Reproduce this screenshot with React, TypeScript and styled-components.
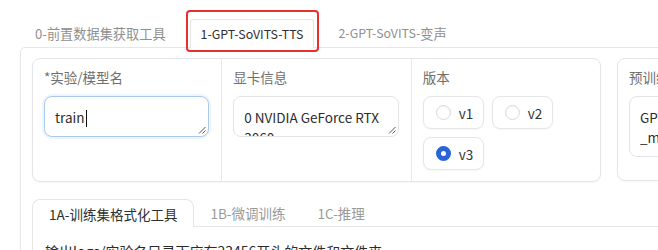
import React from "react";
import styled, { createGlobalStyle, css } from "styled-components";

const Global = createGlobalStyle`
  html, body { margin: 0; padding: 0; background: #ffffff; overflow: hidden; }
  body { font-family: "Noto Sans CJK SC", "Noto Sans", sans-serif; color: #333; }
`;

const Page = styled.div`
  width: 1100px;
  padding-top: 19px;
`;

const TopNav = styled.div`
  position: relative;
  z-index: 1;
  display: flex;
  align-items: flex-start;
  gap: 8px;
  height: 28px;
  padding-left: 19px;
`;

const TopTab = styled.div<{ $active?: boolean }>`
  position: relative;
  box-sizing: border-box;
  display: flex;
  align-items: center;
  height: 28px;
  padding: 0 16px;
  font-size: 13.2px;
  white-space: nowrap;
  color: #8f8f8f;
  ${(p) =>
    p.$active &&
    css`
      height: 29px;
      padding: 0 10px;
      color: #2f2f2f;
      background: #fff;
      border: 1px solid #e6e6e6;
      border-bottom: none;
      border-radius: 3px 3px 0 0;
    `}
`;

const Narrow = styled.span`
  font-size: 12.4px;
`;

const Highlight = styled.span`
  position: absolute;
  left: -5px;
  right: -6px;
  top: -10px;
  bottom: -4px;
  border: 2px solid #e8312f;
  border-radius: 4px;
  pointer-events: none;
`;

const Panel = styled.div`
  margin-left: 20px;
  border: 1px solid #e6e6e6;
  border-radius: 5px 0 0 0;
  padding: 10px 11px 0;
  height: 240px;
`;

const Row = styled.div`
  display: flex;
  gap: 16px;
  align-items: flex-start;
`;

const Card = styled.div<{ $w: number; $h: number }>`
  box-sizing: border-box;
  display: flex;
  width: ${(p) => p.$w}px;
  height: ${(p) => p.$h}px;
  border: 1px solid #e5e5e7;
  border-radius: 8px;
  background: #fff;
  box-shadow: 0 1px 2px rgba(0, 0, 0, 0.03);
`;

const Column = styled.div<{ $divider?: boolean }>`
  flex: 1;
  box-sizing: border-box;
  padding: 9px 12px 0 11px;
  ${(p) => p.$divider && css`border-left: 1px solid #e8e8e8;`}
`;

const Label = styled.div`
  font-size: 13.5px;
  line-height: 18px;
  color: #6e6e6e;
  margin-bottom: 10px;
  white-space: nowrap;
`;

const Field = styled.div<{ $focus?: boolean; $h: number }>`
  position: relative;
  box-sizing: border-box;
  height: ${(p) => p.$h}px;
  padding: 10px 10px 0;
  border: 1px solid #e3e3e6;
  border-radius: 8px;
  background: #fff;
  font-size: 13.5px;
  line-height: 20px;
  color: #2c2c2c;
  overflow: hidden;
  white-space: pre-wrap;
  ${(p) =>
    p.$focus &&
    css`
      border-color: #a9c9ef;
      box-shadow: 0 0 0 2px #eef5fd;
    `}
`;

const Caret = styled.span`
  display: inline-block;
  width: 1px;
  height: 17px;
  margin-left: 1px;
  vertical-align: -4px;
  background: #111;
`;

const Grip = styled.svg`
  position: absolute;
  right: 2px;
  bottom: 2px;
  width: 8px;
  height: 8px;
`;

const RadioGroup = styled.div`
  display: flex;
  flex-wrap: wrap;
  gap: 8px;
  width: 140px;
`;

const RadioItem = styled.div`
  box-sizing: border-box;
  display: flex;
  align-items: center;
  gap: 8px;
  width: 61px;
  height: 33px;
  padding-left: 12px;
  border: 1px solid #e6e6e8;
  border-radius: 8px;
  background: #fff;
  box-shadow: 0 1px 2px rgba(0, 0, 0, 0.04);
  font-size: 13.5px;
  color: #333;
`;

const Circle = styled.span<{ $checked?: boolean }>`
  box-sizing: border-box;
  width: 15px;
  height: 15px;
  border-radius: 50%;
  flex-shrink: 0;
  ${(p) =>
    p.$checked
      ? css`
          background: #fff;
          border: 5px solid #2b63d9;
        `
      : css`
          border: 1px solid #dadade;
          background: #fff;
          box-shadow: inset 0 1px 2px rgba(0, 0, 0, 0.05);
        `}
`;

const SubNav = styled.div`
  position: relative;
  z-index: 1;
  display: flex;
  align-items: flex-start;
  height: 27px;
  margin-top: 17px;
`;

const SubTab = styled.div<{ $active?: boolean }>`
  box-sizing: border-box;
  display: flex;
  align-items: center;
  height: 27px;
  padding: 0 16px;
  font-size: 13.5px;
  white-space: nowrap;
  color: #9a9a9a;
  ${(p) =>
    p.$active &&
    css`
      height: 28px;
      color: #2f2f2f;
      background: #fff;
      border: 1px solid #e6e6e6;
      border-bottom: none;
      border-radius: 8px 8px 0 0;
    `}
`;

const SubPanel = styled.div`
  border-top: 1px solid #e6e6e6;
  border-left: 1px solid #e6e6e6;
  padding: 14px 12px 0;
  font-size: 14px;
  line-height: 20px;
  color: #2a2a2a;
  white-space: nowrap;
`;

const ResizeGrip = () => (
  <Grip viewBox="0 0 8 8">
    <path d="M7.5 1 L1 7.5 M7.5 4.5 L4.5 7.5" stroke="#555" strokeWidth="1" fill="none" />
  </Grip>
);

export default function App() {
  return (
    <>
      <Global />
      <Page>
        <TopNav>
          <TopTab>0-前置数据集获取工具</TopTab>
          <TopTab $active>
            <Narrow>1-GPT-SoVITS-TTS</Narrow>
            <Highlight />
          </TopTab>
          <TopTab>
            <Narrow>2-GPT-SoVITS-</Narrow>变声
          </TopTab>
        </TopNav>
        <Panel>
          <Row>
            <Card $w={569} $h={124}>
              <Column>
                <Label>*实验/模型名</Label>
                <Field $focus $h={41}>
                  train<Caret />
                  <ResizeGrip />
                </Field>
              </Column>
              <Column $divider>
                <Label>显卡信息</Label>
                <Field $h={41}>
                  0 NVIDIA GeForce RTX 3060
                  <ResizeGrip />
                </Field>
              </Column>
              <Column $divider>
                <Label>版本</Label>
                <RadioGroup>
                  <RadioItem>
                    <Circle />
                    v1
                  </RadioItem>
                  <RadioItem>
                    <Circle />
                    v2
                  </RadioItem>
                  <RadioItem>
                    <Circle $checked />
                    v3
                  </RadioItem>
                </RadioGroup>
              </Column>
            </Card>
            <Card $w={200} $h={123}>
              <Column>
                <Label>预训练SoVITS-G模型路径</Label>
                <Field $h={61}>{"GPT_SoVITS/pretrained\n_models/s2Gv3.pth"}</Field>
              </Column>
            </Card>
          </Row>
          <SubNav>
            <SubTab $active>1A-训练集格式化工具</SubTab>
            <SubTab>1B-微调训练</SubTab>
            <SubTab>1C-推理</SubTab>
          </SubNav>
          <SubPanel>输出logs/实验名目录下应有23456开头的文件和文件夹</SubPanel>
        </Panel>
      </Page>
    </>
  );
}
